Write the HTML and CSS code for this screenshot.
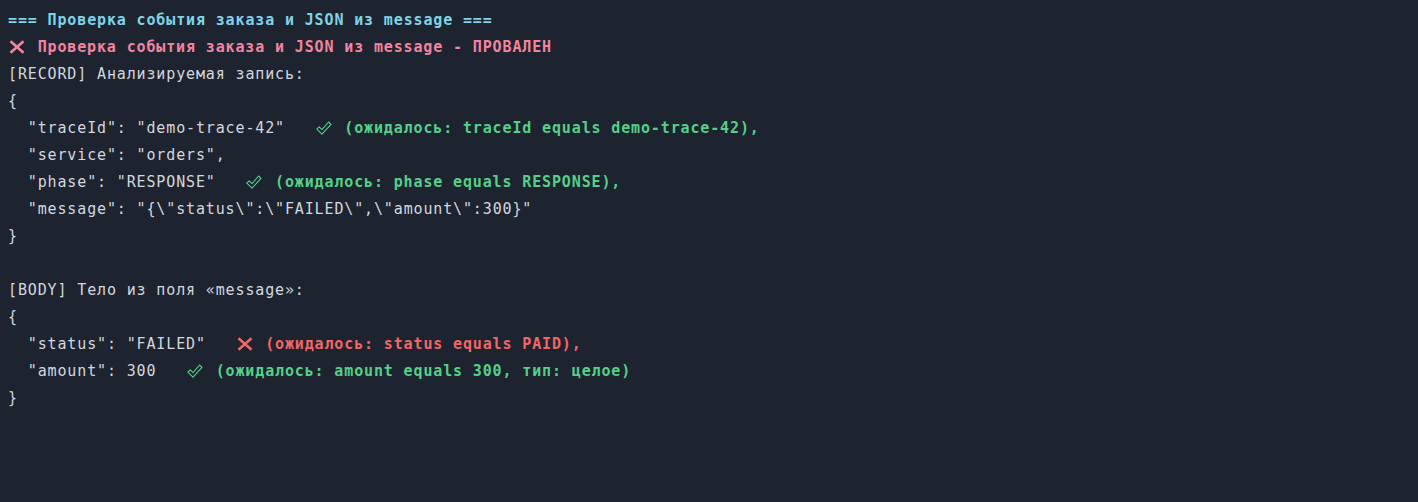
FILE: index.html
```html
<!DOCTYPE html>
<html lang="ru">
<head>
<meta charset="utf-8">
<title>Проверка события заказа</title>
<link rel="stylesheet" href="styles.css">
</head>
<body>
<div class="log">
  <div class="line title">=== Проверка события заказа и JSON из message ===</div>
  <div class="line fail"><span class="ico"><svg class="x" viewBox="0 0 16 14" width="16" height="14"><path d="M1.5 1.2 L14.5 12.8 M14.5 1.2 L1.5 12.8"/></svg></span> Проверка события заказа и JSON из message - ПРОВАЛЕН</div>
  <div class="line">[RECORD] Анализируемая запись:</div>
  <div class="line">{</div>
  <div class="line">  "traceId": "demo-trace-42"   <span class="note ok"><span class="ico"><svg class="chk" viewBox="0 0 16 14" width="16" height="14"><path d="M0.8 8.2 L3.2 5.9 L6 8.6 L12.6 1 L15 3.3 L6 13.2 Z"/></svg></span> (ожидалось: traceId equals demo-trace-42),</span></div>
  <div class="line">  "service": "orders",</div>
  <div class="line">  "phase": "RESPONSE"   <span class="note ok"><span class="ico"><svg class="chk" viewBox="0 0 16 14" width="16" height="14"><path d="M0.8 8.2 L3.2 5.9 L6 8.6 L12.6 1 L15 3.3 L6 13.2 Z"/></svg></span> (ожидалось: phase equals RESPONSE),</span></div>
  <div class="line">  "message": "{\"status\":\"FAILED\",\"amount\":300}"</div>
  <div class="line">}</div>
  <div class="line"> </div>
  <div class="line">[BODY] Тело из поля «message»:</div>
  <div class="line">{</div>
  <div class="line">  "status": "FAILED"   <span class="note bad"><span class="ico"><svg class="x" viewBox="0 0 16 14" width="16" height="14"><path d="M1.5 1.2 L14.5 12.8 M14.5 1.2 L1.5 12.8"/></svg></span> (ожидалось: status equals PAID),</span></div>
  <div class="line">  "amount": 300   <span class="note ok"><span class="ico"><svg class="chk" viewBox="0 0 16 14" width="16" height="14"><path d="M0.8 8.2 L3.2 5.9 L6 8.6 L12.6 1 L15 3.3 L6 13.2 Z"/></svg></span> (ожидалось: amount equals 300, тип: целое)</span></div>
  <div class="line">}</div>
</div>
</body>
</html>
```

FILE: styles.css
```css
html, body {
  background: #1e2330;
}
body {
  margin: 7px 8px 8px;
  color: #d3d7de;
  font-family: "DejaVu Sans Mono", "Liberation Mono", monospace;
  font-size: 15px;
  letter-spacing: 0.86px;
  line-height: 27px;
}
.log {
  display: flex;
  flex-direction: column;
}
.line {
  white-space: pre;
  height: 27px;
}
.title {
  color: #7fd3e6;
  font-weight: bold;
}
.fail {
  color: #f1859f;
  font-weight: bold;
}
.note {
  font-weight: bold;
}
.note.ok {
  color: #55d088;
}
.note.bad {
  color: #f26666;
}
.ico {
  display: inline-block;
  width: 19.74px;
  height: 14px;
  vertical-align: -2px;
  position: relative;
}
.ico svg {
  position: absolute;
  left: 1px;
  top: 0;
}
.x path {
  fill: none;
  stroke: currentColor;
  stroke-width: 2.6;
}
.chk path {
  fill: none;
  stroke: currentColor;
  stroke-width: 1.1;
  stroke-linejoin: round;
}
```
